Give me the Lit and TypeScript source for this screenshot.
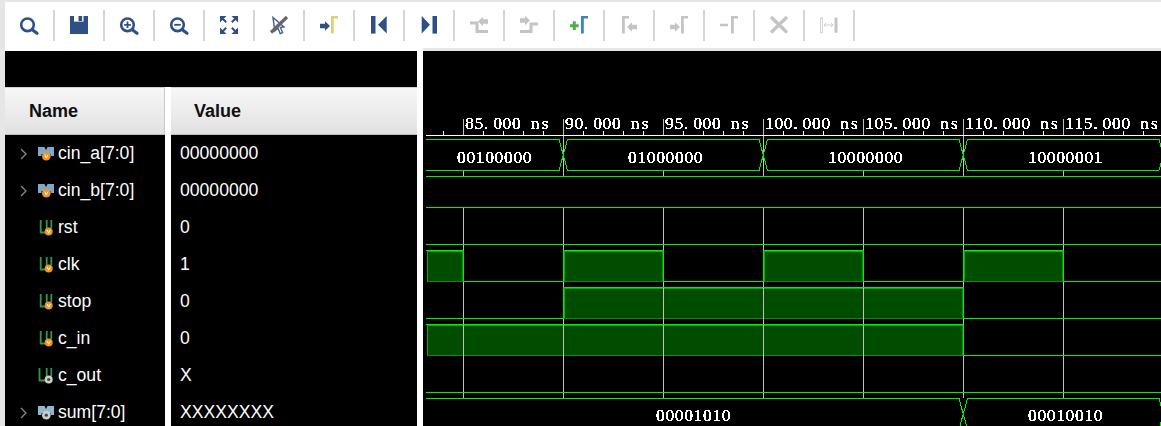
import { LitElement, html, svg, css } from "lit";
import { customElement } from "lit/decorators.js";

const BLUE = "#2f5085";
const GRAY = "#c4c4c4";

const marker = (x: number, color: string) => svg`
  <rect x=${x} y="6" width="2.8" height="17.5" fill=${color}></rect>
  <rect x=${x} y="6" width="7" height="2.5" fill=${color}></rect>`;

const mag = (extra: unknown) => svg`
  <circle cx="13.5" cy="14.8" r="6.3" fill="none" stroke=${BLUE} stroke-width="2.6"></circle>
  <path d="M18.6 20l4.4 3.2" stroke=${BLUE} stroke-width="3.2" stroke-linecap="round"></path>
  ${extra}`;

const arrowR = (x: number, y: number, c: string) => svg`
  <path d="M${x} ${y - 2.2}h5v-2.6l5 4.8-5 4.8v-2.6h-5z" fill=${c}></path>`;
const arrowL = (x: number, y: number, c: string) => svg`
  <path d="M${x} ${y}l5-4.8v2.6h5v4.4h-5v2.6z" fill=${c}></path>`;

const tools = [
  mag(null),
  svg`<path d="M6 6h18v18H6z" fill=${BLUE}></path>
    <rect x="10" y="6" width="9.5" height="5.6" fill="#fff"></rect>
    <rect x="14.5" y="6" width="3.6" height="5" fill=${BLUE}></rect>`,
  mag(svg`<path d="M10.2 14.8h6.6M13.5 11.5v6.6" stroke=${BLUE} stroke-width="1.8"></path>`),
  mag(svg`<path d="M10.2 14.8h6.6" stroke=${BLUE} stroke-width="1.8"></path>`),
  svg`<g fill=${BLUE} stroke=${BLUE}>
      <path d="M6 6h6.5L6 12.5z" stroke="none"></path><path d="M8 8l4.2 4.2" stroke-width="2"></path>
      <path d="M24 6h-6.5L24 12.5z" stroke="none"></path><path d="M22 8l-4.2 4.2" stroke-width="2"></path>
      <path d="M6 24h6.5L6 17.5z" stroke="none"></path><path d="M8 22l4.2-4.2" stroke-width="2"></path>
      <path d="M24 24h-6.5l6.5-6.5z" stroke="none"></path><path d="M22 22l-4.2-4.2" stroke-width="2"></path>
    </g>`,
  svg`<path d="M9 7.5L20 17l-3.6.4 2.2 5.2-2.4 1-2.2-5.3-3.2 2.6z" fill="#fff" stroke="#3b5f9a" stroke-width="1.4"></path>
    <path d="M7 22.5L23 7" stroke="#666" stroke-width="3.2"></path>`,
  svg`${arrowR(6, 16, BLUE)}${marker(17, "#e3cf6f")}`,
  svg`<rect x="7" y="6" width="4.5" height="17.6" fill=${BLUE}></rect><path d="M14 14.8L22.7 6v17.6z" fill=${BLUE}></path>`,
  svg`<path d="M7.7 6v17.6L16 14.8z" fill=${BLUE}></path><rect x="18.5" y="6" width="4.5" height="17.6" fill=${BLUE}></rect>`,
  svg`<path d="M6 13h7v8.5h11" fill="none" stroke=${GRAY} stroke-width="3"></path>${arrowL(14, 11.5, GRAY)}`,
  svg`<path d="M6 21.5h11V14h7" fill="none" stroke=${GRAY} stroke-width="3"></path>${arrowR(6, 10.5, GRAY)}`,
  svg`<path d="M6 15.7h8.7M10.3 11.3v8.8" stroke="#4cae4c" stroke-width="3"></path>${marker(17, "#3f86b8")}`,
  svg`${marker(8, GRAY)}${arrowL(13, 17, GRAY)}`,
  svg`${arrowR(6, 17, GRAY)}${marker(17, GRAY)}`,
  svg`<path d="M6 15h8" stroke=${GRAY} stroke-width="2.5"></path>${marker(17, GRAY)}`,
  svg`<path d="M7 7l16 15.5M23 7L7 22.5" stroke=${GRAY} stroke-width="3.4"></path>`,
  svg`<rect x="6.5" y="8" width="2" height="14.6" fill="none" stroke="#d4d4d4"></rect>
    <path d="M10 15h9M12 13l-2 2 2 2M17 13l2 2-2 2" fill="none" stroke="#cfcfcf"></path>
    <rect x="20.5" y="7.5" width="3" height="15.2" fill=${GRAY}></rect>`,
];

type Sig = { name: string; value: string; bus?: boolean; unknown?: boolean };
const signals: Sig[] = [
  { name: "cin_a[7:0]", value: "00000000", bus: true },
  { name: "cin_b[7:0]", value: "00000000", bus: true },
  { name: "rst", value: "0" },
  { name: "clk", value: "1" },
  { name: "stop", value: "0" },
  { name: "c_in", value: "0" },
  { name: "c_out", value: "X", unknown: true },
  { name: "sum[7:0]", value: "XXXXXXXX", bus: true, unknown: true },
];

const dot = (unknown?: boolean, cx = 10.7, cy = 11.5, r = 4) =>
  unknown
    ? svg`<circle cx=${cx} cy=${cy} r=${r} fill="#cdcdcd"></circle><circle cx=${cx} cy=${cy} r="1.6" fill="#444"></circle>`
    : svg`<circle cx=${cx} cy=${cy} r=${r} fill="#ee9528"></circle>
        <path d="M${cx - 1.6} ${cy - 1.5}l1.6 3.2 1.6-3.2" fill="none" stroke="#fff" stroke-width="1"></path>`;

const sigIcon = (s: Sig) =>
  s.bus
    ? html`<svg class="icon" viewBox="0 0 16 16">
        <path d="M0 1h6.5L8 4l1.5-3H16v9h-3.5V8h-9v2H0z" fill=${s.unknown ? "#8fb8d0" : "#7fa8c6"}></path>
        ${dot(s.unknown, 8.3, 10.2, 4.3)}
      </svg>`
    : html`<svg class="icon" viewBox="0 0 16 16">
        <path d="M${s.unknown ? 1.5 : 2.7} 0v12.5H7M8.7 0v8M13.3 0v8" fill="none" stroke="#2f9a45" stroke-width="1.8"></path>
        ${dot(s.unknown)}
      </svg>`;

// x positions of the waveform, in page coordinates
const GRID = [463, 563, 663, 763, 863, 963, 1063];
const CELL = 9.4;

const pitched = (str: string, x: number, y: number) =>
  svg`<text x=${[...str].map((c, i) => (x + i * CELL + (c === "s" ? 1.5 : 0)).toFixed(1)).join(" ")} y=${y}>${str}</text>`;

const gridLines = () => {
  const cont = [563, 763, 963];
  return GRID.map((x) => {
    const top = cont.includes(x) ? `M${x + 0.5} 119V176` : `M${x + 0.5} 119V135M${x + 0.5} 170V176`;
    return svg`<path d="${top}M${x + 0.5} 208V398" stroke="#c0c0c0" fill="none"></path>`;
  });
};

const minorTicks = () => {
  let d = "";
  for (let x = 443; x < 1161; x += 20) if ((x - 463) % 100) d += `M${x + 0.5} 131V135`;
  return svg`<path d=${d} stroke="#fff"></path><path d="M426 135.5H1161" stroke="#fff"></path>`;
};

const bus = (top: number, bot: number, edges: number[]) => {
  let d = "";
  let from = 426;
  for (const t of edges) {
    d += `M${from} ${top + 0.5}H${t - 4}L${t + 4.5} ${bot + 0.5}H${t + 4}`;
    d += `M${from} ${bot + 0.5}H${t - 4}L${t + 4.5} ${top + 0.5}H${t + 4}`;
    from = t + 4;
  }
  if (from < 1161) d += `M${from} ${top + 0.5}H1161M${from} ${bot + 0.5}H1161`;
  return svg`<path d=${d} stroke="#00f000" fill="none"></path>`;
};

const clkSpans: [number, number][] = [[426, 463], [563, 663], [763, 863], [963, 1063]];
const stopSpans: [number, number][] = [[563, 963]];
const cinSpans: [number, number][] = [[426, 963]];

// block under a high level: dim outline, then a second, softer row along the top and the rising edge
const fills = (low: number, high: number, spans: [number, number][]) =>
  spans.map(([a, b]) => {
    const left = a + 1;
    return svg`<rect x=${left + 0.5} y=${high + 1.5} width=${b - left - 1} height=${low - high - 1} fill="#004d00" stroke="#0c8a0c"></rect>
      <path d="M${left + 0.5} ${low}V${high + 1.5}H${b}" fill="none" stroke="#00b000"></path>`;
  });

const wire = (low: number, high: number, spans: [number, number][]) => {
  let d = "";
  let from = 426;
  for (const [a, b] of spans) {
    if (a > from) d += `M${from} ${low + 0.5}H${a + 0.5}V${high + 0.5}`;
    else d += `M${a} ${high + 0.5}`;
    d += `H${b + 0.5}V${low + 1}`;
    from = b;
  }
  if (from < 1161) d += `M${from} ${low + 0.5}H1161`;
  return svg`<path d=${d} stroke="#00f000" fill="none"></path>`;
};

@customElement("app-root")
export class AppRoot extends LitElement {
  static styles = css`
    :host {
      display: block;
      width: 1161px;
      height: 426px;
      overflow: hidden;
      background: #e6e6e6;
      font-family: "Liberation Sans", Arial, sans-serif;
    }
    .toolbar {
      display: flex;
      margin: 2px 0 0 5px;
      height: 46px;
      background: #fff;
      align-items: center;
    }
    .tool {
      width: 50px;
      height: 31px;
      box-sizing: border-box;
      border-right: 2px solid #d6d6d6;
      display: flex;
      justify-content: center;
      align-items: center;
    }
    .tool svg {
      width: 30px;
      height: 30px;
      flex: none;
    }
    .main {
      display: flex;
      height: 378px;
    }
    .left {
      width: 412px;
      margin-left: 5px;
      border-top: 3px solid #fff;
      background: #000;
      padding-top: 36px;
      overflow: hidden;
    }
    .gap {
      width: 6px;
      background: #fff;
    }
    .wave {
      flex: 1;
      border-top: 3px solid #e6e6e6;
      background: #000;
      overflow: hidden;
    }
    .wave svg {
      display: block;
    }
    .head,
    .row {
      display: grid;
      grid-template-columns: 160px 6px 1fr;
    }
    .head {
      height: 48px;
      font-size: 18px;
      font-weight: 700;
      color: #101010;
    }
    .head > div:not(.bar) {
      box-sizing: border-box;
      display: flex;
      align-items: center;
      background: linear-gradient(#f7f7f7, #e1e1e1);
      border-top: 1px solid #cfcfcf;
      border-bottom: 1px solid #bdbdbd;
    }
    .head .hname {
      padding-left: 24px;
      border-right: 1px solid #c8c8c8;
    }
    .head .hval {
      padding-left: 23px;
    }
    .bar {
      background: #fff;
    }
    .row {
      height: 37px;
      color: #fff;
      font-size: 17.6px;
    }
    .nm {
      display: flex;
      align-items: center;
      padding-left: 15px;
    }
    .chev {
      width: 7px;
      height: 12px;
      margin-right: 11px;
      flex: none;
    }
    .icon {
      width: 16px;
      height: 16px;
      margin-right: 4px;
      flex: none;
    }
    .val {
      display: flex;
      align-items: center;
      padding-left: 9px;
    }
    .mono {
      font-family: "Liberation Serif", serif;
      font-size: 17.5px;
      fill: #fff;
    }
  `;

  render() {
    return html`
      <div class="toolbar">
        ${tools.map((t) => html`<div class="tool"><svg viewBox="0 0 30 30">${t}</svg></div>`)}
      </div>
      <div class="main">
        <div class="left">
          <div class="head">
            <div class="hname">Name</div>
            <div class="bar"></div>
            <div class="hval">Value</div>
          </div>
          ${signals.map(
            (s) => html`<div class="row">
              <div class="nm">
                <svg class="chev" viewBox="0 0 7 12">
                  ${s.bus ? svg`<path d="M1 1l5 5-5 5" fill="none" stroke="#8a8a8a" stroke-width="1.3"></path>` : null}
                </svg>
                ${sigIcon(s)}<span>${s.name}</span>
              </div>
              <div class="bar"></div>
              <div class="val">${s.value}</div>
            </div>`
          )}
        </div>
        <div class="gap"></div>
        <div class="wave">
          <svg width="738" height="375" viewBox="423 51 738 375" shape-rendering="crispEdges">
            <defs>
              <filter id="px" filterUnits="userSpaceOnUse" x="423" y="51" width="738" height="375" color-interpolation-filters="sRGB">
                <feComponentTransfer>
                  <feFuncA type="discrete" tableValues="0 1 1 1"></feFuncA>
                </feComponentTransfer>
              </filter>
            </defs>
            ${fills(281, 250, clkSpans)} ${fills(318, 287, stopSpans)} ${fills(355, 324, cinSpans)}
            ${gridLines()} ${minorTicks()}
            ${bus(139, 170, [563, 763, 963, 1163])}
            <path d="M426 176.5H1161M426 207.5H1161M426 244.5H1161M426 392.5H1161" stroke="#00f000"></path>
            ${wire(281, 250, clkSpans)} ${wire(318, 287, stopSpans)} ${wire(355, 324, cinSpans)}
            ${bus(398, 429, [963, 1163])}
            <g class="mono" filter="url(#px)">
              ${pitched("85.000 ns", 465, 129)} ${pitched("90.000 ns", 565, 129)}
              ${pitched("95.000 ns", 665, 129)} ${pitched("100.000 ns", 765, 129)}
              ${pitched("105.000 ns", 865, 129)} ${pitched("110.000 ns", 965, 129)}
              ${pitched("115.000 ns", 1065, 129)}
              ${pitched("00100000", 457, 163)} ${pitched("01000000", 628, 163)}
              ${pitched("10000000", 828, 163)} ${pitched("10000001", 1028, 163)}
              ${pitched("00001010", 656, 421)} ${pitched("00010010", 1028, 421)}
            </g>
          </svg>
        </div>
      </div>
    `;
  }
}
